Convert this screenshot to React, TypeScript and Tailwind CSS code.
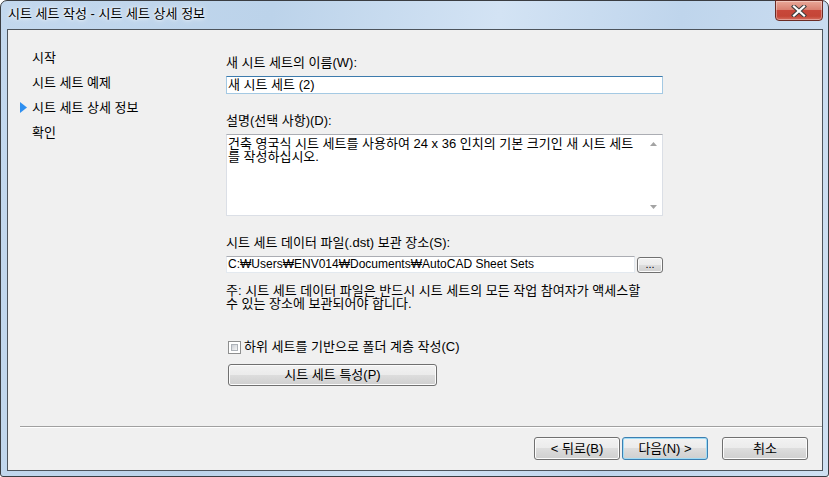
import React from "react";

const FONT = "font-['Liberation_Sans','Noto_Sans_CJK_KR',sans-serif]";

function WinButton({
  children,
  className = "",
  isDefault = false,
}: {
  children: React.ReactNode;
  className?: string;
  isDefault?: boolean;
}) {
  return (
    <div
      className={
        "flex items-center justify-center rounded-[3px] border text-black " +
        (isDefault
          ? "border-[#3c7fb1] bg-[linear-gradient(to_bottom,#f2f2f2_0%,#ebebeb_50%,#dddddd_50%,#cfcfcf_100%)] shadow-[inset_0_0_0_1px_#9fdcf6] "
          : "border-[#707070] bg-[linear-gradient(to_bottom,#f2f2f2_0%,#ebebeb_50%,#dddddd_50%,#cfcfcf_100%)] shadow-[inset_0_0_0_1px_#fcfcfc] ") +
        className
      }
    >
      {children}
    </div>
  );
}

export default function App() {
  return (
    <div className={"w-[829px] h-[477px] bg-white " + FONT}>
      <div className="relative w-[829px] h-[477px] rounded-t-[7px] rounded-b-[3px] border border-[#3a3d42] bg-[linear-gradient(100deg,#c3d8ee_0%,#bcd3ea_30%,#d3e3f4_55%,#bfd5ec_75%,#cfe0f2_100%)] px-[6px] pt-[28px] pb-[6px]">
        {/* title */}
        <div className="absolute left-[7px] top-[6px] text-[13px] leading-[14px] text-black [text-shadow:0_0_6px_#ffffff,0_0_3px_#ffffff]">
          시트 세트 작성 - 시트 세트 상세 정보
        </div>
        {/* close button */}
        <div className="absolute left-[774px] top-[-1px] w-[48px] h-[21px] rounded-b-[4px] border border-[#6b2b24] bg-[linear-gradient(to_bottom,#e9a899_0%,#d98171_45%,#c8473a_50%,#c44536_80%,#d66e5e_100%)] shadow-[inset_0_0_0_1px_rgba(255,255,255,0.35)] flex items-center justify-center">
          <svg width="16" height="12" viewBox="0 0 16 12">
            <path d="M3 1.5 L13 10.5 M13 1.5 L3 10.5" stroke="#3d3d3d" strokeWidth="4.2" strokeLinecap="square" />
            <path d="M3 1.5 L13 10.5 M13 1.5 L3 10.5" stroke="#ffffff" strokeWidth="2.2" strokeLinecap="square" />
          </svg>
        </div>

        {/* client area */}
        <div className="w-[816px] h-[442px] border border-[#4d545c] bg-[#f0f0f0] flex flex-col text-[13px] text-black">
          <div className="flex h-[396px]">
            {/* nav */}
            <div className="w-[218px] pt-[15px] pl-[12px]">
              <div className="h-[25px] flex items-center pl-[12px]">시작</div>
              <div className="h-[25px] flex items-center pl-[12px]">시트 세트 예제</div>
              <div className="h-[25px] flex items-center">
                <div className="w-[12px] flex items-center">
                  <svg width="7" height="11" viewBox="0 0 7 11">
                    <path d="M0 0 L7 5.5 L0 11 Z" fill="#2e8ff0" />
                  </svg>
                </div>
                시트 세트 상세 정보
              </div>
              <div className="h-[25px] flex items-center pl-[12px]">확인</div>
            </div>

            {/* form */}
            <div className="w-[437px] pt-[26px] flex flex-col">
              <div className="h-[14px] leading-[14px]">새 시트 세트의 이름(W):</div>
              <div className="mt-[6px] h-[18px] border border-[#a4c9e3] border-t-[#3d7bad] bg-white pl-[1px] leading-[16px] whitespace-nowrap">
                새 시트 세트 (2)
              </div>

              <div className="mt-[20px] h-[14px] leading-[14px]">설명(선택 사항)(D):</div>
              <div className="mt-[6px] h-[82px] border border-[#dbdfe6] border-t-[#abadb3] bg-white flex">
                <div className="flex-1 pl-[1px] pt-[2px] leading-[13px] whitespace-nowrap">
                  <div>건축 영국식 시트 세트를 사용하여 24 x 36 인치의 기본 크기인 새 시트 세트</div>
                  <div>를 작성하십시오.</div>
                </div>
                <div className="w-[17px] flex flex-col items-center justify-between pt-[7px] pb-[6px]">
                  <svg width="7" height="4" viewBox="0 0 7 4">
                    <path d="M0 4 L3.5 0 L7 4 Z" fill="#a3a3a3" />
                  </svg>
                  <svg width="7" height="4" viewBox="0 0 7 4">
                    <path d="M0 0 L3.5 4 L7 0 Z" fill="#a3a3a3" />
                  </svg>
                </div>
              </div>

              <div className="mt-[20px] h-[14px] leading-[14px]">시트 세트 데이터 파일(.dst) 보관 장소(S):</div>
              <div className="mt-[6px] flex h-[17px]">
                <div className="w-[409px] h-[17px] border border-[#e3e9ef] border-t-[#abadb3] bg-white pl-[1px] text-[12px] leading-[15px] whitespace-nowrap">
                  C:₩Users₩ENV014₩Documents₩AutoCAD Sheet Sets
                </div>
                <WinButton className="ml-[2px] w-[26px] h-[16px] mt-[1px] leading-[10px] pb-[2px] text-[11px]">...</WinButton>
              </div>

              <div className="mt-[11px] leading-[13px] whitespace-nowrap">
                <div>주: 시트 세트 데이터 파일은 반드시 시트 세트의 모든 작업 참여자가 액세스할</div>
                <div>수 있는 장소에 보관되어야 합니다.</div>
              </div>

              <div className="mt-[30px] h-[14px] flex items-center pl-[2px]">
                <div className="w-[13px] h-[13px] border border-[#8e8f8f] bg-white p-[2px] mr-[3px]">
                  <div className="w-full h-full bg-[linear-gradient(135deg,#cbcfd5,#f6f6f6)] border border-[#aeb3b9]" />
                </div>
                하위 세트를 기반으로 폴더 계층 작성(C)
              </div>

              <WinButton className="mt-[10px] ml-[2px] w-[209px] h-[22px]">시트 세트 특성(P)</WinButton>
            </div>
          </div>

          {/* separator */}
          <div className="ml-[12px] h-[1px] bg-[#a0a0a0]" />
          <div className="ml-[12px] h-[1px] bg-white" />

          {/* bottom buttons */}
          <div className="mt-[9px] flex pl-[526px]">
            <WinButton className="w-[86px] h-[23px]">&lt; 뒤로(B)</WinButton>
            <WinButton isDefault className="ml-[2px] w-[86px] h-[23px]">다음(N) &gt;</WinButton>
            <WinButton className="ml-[14px] w-[86px] h-[23px]">취소</WinButton>
          </div>
        </div>
      </div>
    </div>
  );
}
